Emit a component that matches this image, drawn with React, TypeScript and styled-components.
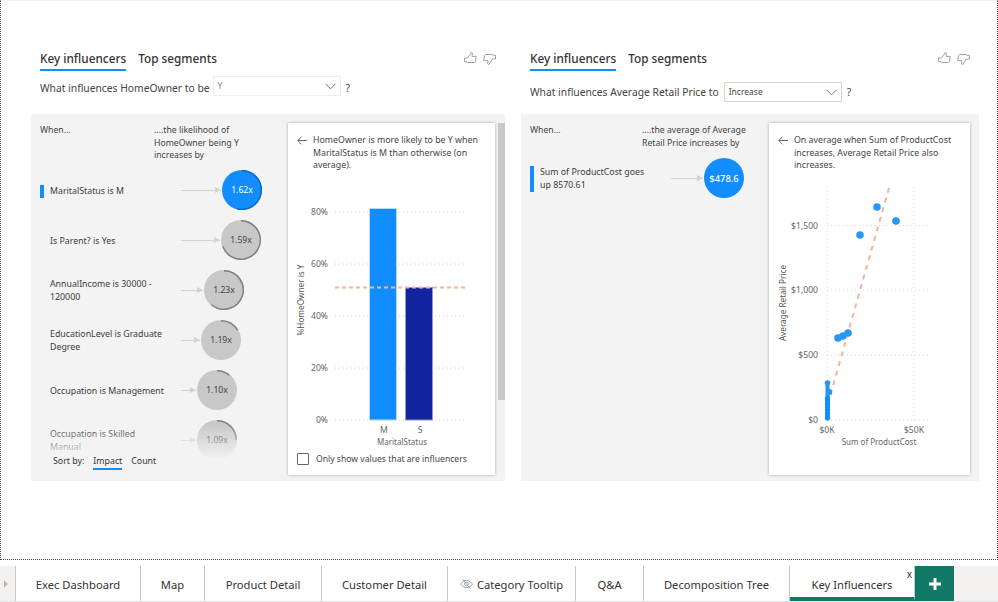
import React from "react";
import styled, { createGlobalStyle } from "styled-components";

const GlobalStyle = createGlobalStyle`
  html, body {
    margin: 0;
    padding: 0;
    background: #fff;
  }
  body {
    font-family: "Noto Sans", "Open Sans", sans-serif;
    color: #333;
  }
`;

const Page = styled.div`
  width: 998px;
  height: 602px;
  display: flex;
  flex-direction: column;
  overflow: hidden;
`;

const Canvas = styled.div`
  box-sizing: border-box;
  height: 560px;
  border: 1px dotted #444;
  border-top: 1px solid #f2f2f2;
  padding: 47px 18px 0 30px;
  display: flex;
  gap: 16px;
`;

const Visual = styled.div<{ $width: number }>`
  width: ${(p) => p.$width}px;
  flex: none;
  display: flex;
  flex-direction: column;
`;

const VisualHead = styled.div`
  height: 23px;
  padding: 0 9px;
  display: flex;
  align-items: flex-start;
  justify-content: space-between;
`;

const TabRow = styled.div`
  display: flex;
  gap: 12px;
`;

const ViewTab = styled.div<{ $active?: boolean }>`
  height: 23px;
  box-sizing: border-box;
  padding-top: 2px;
  font-size: 11.8px;
  line-height: 17px;
  font-weight: 500;
  color: #333;
  border-bottom: 2px solid ${(p) => (p.$active ? "#118dff" : "transparent")};
`;

const Thumbs = styled.div`
  display: flex;
  gap: 6px;
  padding-top: 4px;
`;

const Question = styled.div<{ $top: number }>`
  box-sizing: border-box;
  height: 43px;
  padding: ${(p) => p.$top}px 0 0 9px;
  display: flex;
  align-items: flex-start;
  font-size: 10.3px;
  line-height: 20px;
  color: #444;
`;

const Select = styled.div<{ $width: number; $strong?: boolean }>`
  box-sizing: border-box;
  width: ${(p) => p.$width}px;
  height: 20px;
  margin: ${(p) => (p.$strong ? "0 5px 0 5px" : "-2px 5px 0 3px")};
  padding: 0 4px;
  display: flex;
  align-items: center;
  justify-content: space-between;
  background: #fff;
  border: ${(p) => (p.$strong ? "1px solid #d4d4d4" : "1px solid #eee")};
  font-size: 8.5px;
  color: ${(p) => (p.$strong ? "#444" : "#7a86a0")};
`;

const Panel = styled.div`
  height: 367px;
  background: #f3f3f3;
  display: flex;
  position: relative;
`;

const Influencers = styled.div<{ $width: number }>`
  width: ${(p) => p.$width}px;
  flex: none;
  padding: 10px 0 0 9px;
  box-sizing: border-box;
  position: relative;
  overflow: hidden;
`;

const ColumnHeads = styled.div<{ $height: number; $gap: number }>`
  height: ${(p) => p.$height}px;
  display: grid;
  grid-template-columns: ${(p) => p.$gap}px 1fr;
  font-size: 8.7px;
  line-height: 12.6px;
  color: #444;
`;

const InfluencerRow = styled.div`
  height: 50px;
  display: flex;
  align-items: center;
`;

const Label = styled.div<{ $selected?: boolean }>`
  box-sizing: border-box;
  width: 141px;
  flex: none;
  margin-top: 2px;
  padding-left: ${(p) => (p.$selected ? "6px" : "10px")};
  border-left: ${(p) => (p.$selected ? "4px solid #118dff" : "none")};
  font-size: 8.8px;
  line-height: 13px;
  color: #3c3c3c;
`;

const Connector = styled.div<{ $length: number }>`
  width: ${(p) => p.$length}px;
  flex: none;
  height: 1px;
  background: #d2d2d2;
  position: relative;
  &::after {
    content: "";
    position: absolute;
    right: 0;
    top: -3px;
    border-left: 6px solid #d2d2d2;
    border-top: 3.5px solid transparent;
    border-bottom: 3.5px solid transparent;
  }
`;

const BubbleWrap = styled.div<{ $selected?: boolean }>`
  width: 40px;
  height: 40px;
  flex: none;
  margin-left: 1px;
  border-radius: 50%;
  position: relative;
  display: flex;
  align-items: center;
  justify-content: center;
  background: ${(p) => (p.$selected ? "#118dff" : "#c8c8c8")};
  color: ${(p) => (p.$selected ? "#fff" : "#444")};
  & > svg {
    position: absolute;
    inset: 0;
  }
`;

const BubbleText = styled.span<{ $big?: boolean }>`
  position: relative;
  font-size: ${(p) => (p.$big ? "9.4px" : "8.6px")};
  font-weight: ${(p) => (p.$big ? 500 : 400)};
`;

const Fade = styled.div`
  position: absolute;
  left: 0;
  right: 0;
  bottom: 21px;
  height: 36px;
  background: linear-gradient(rgba(243, 243, 243, 0), #f3f3f3);
`;

const SortBar = styled.div`
  position: absolute;
  left: 22px;
  bottom: 11px;
  display: flex;
  gap: 9px;
  font-size: 8.8px;
  line-height: 14px;
  color: #333;
`;

const SortOption = styled.span<{ $active?: boolean }>`
  border-bottom: 2px solid ${(p) => (p.$active ? "#118dff" : "transparent")};
`;

const DetailCard = styled.div<{ $width: number }>`
  box-sizing: border-box;
  width: ${(p) => p.$width}px;
  height: 352px;
  margin-top: 9px;
  flex: none;
  background: #fff;
  box-shadow: 0 0 3px rgba(0, 0, 0, 0.3);
  display: flex;
  flex-direction: column;
  position: relative;
`;

const CardHead = styled.div`
  height: 50px;
  flex: none;
  padding: 11px 6px 0 9px;
  box-sizing: border-box;
  display: flex;
  gap: 6px;
  font-size: 8.8px;
  line-height: 12.5px;
  color: #444;
`;

const BackIcon = styled.svg`
  flex: none;
  margin-top: 2px;
`;

const Chart = styled.svg`
  display: block;
  flex: none;
`;

const ChartText = styled.text<{ $size?: number; $dark?: boolean }>`
  font-family: "Noto Sans", sans-serif;
  font-size: ${(p) => p.$size ?? 8.6}px;
  fill: ${(p) => (p.$dark ? "#555" : "#666")};
`;

const CheckRow = styled.div`
  display: flex;
  align-items: center;
  gap: 7px;
  padding: 5px 0 0 9px;
  font-size: 8.6px;
  line-height: 12px;
  color: #444;
`;

const CheckBox = styled.span`
  width: 12px;
  height: 12px;
  box-sizing: border-box;
  border: 1px solid #666;
  border-radius: 1px;
  background: #fff;
`;

const Scrollbar = styled.div`
  position: absolute;
  left: 467px;
  top: 9px;
  width: 7px;
  height: 277px;
  background: #c8c8c8;
`;

const TabStrip = styled.div`
  margin-top: 6px;
  height: 36px;
  box-sizing: border-box;
  display: flex;
  background: #f3f2f1;
  border-bottom: 1px solid #e4e4e4;
`;

const Pager = styled.div`
  width: 16px;
  flex: none;
  display: flex;
  align-items: center;
  padding-left: 4px;
  box-sizing: border-box;
  border-right: 1px solid #c8c8c8;
  &::before {
    content: "";
    border-left: 4px solid #bbb;
    border-top: 4px solid transparent;
    border-bottom: 4px solid transparent;
  }
`;

const PageTab = styled.div<{ $width: number; $active?: boolean }>`
  width: ${(p) => p.$width}px;
  flex: none;
  box-sizing: border-box;
  background: #fff;
  border-right: 1px solid #c8c8c8;
  border-bottom: ${(p) => (p.$active ? "4px solid #117865" : "none")};
  padding-top: ${(p) => (p.$active ? "5px" : "1px")};
  display: flex;
  align-items: center;
  justify-content: center;
  gap: 4px;
  font-size: 11.2px;
  color: #333;
  position: relative;
`;

const CloseMark = styled.span`
  position: absolute;
  top: 2px;
  right: 2px;
  font-size: 10px;
  line-height: 12px;
  color: #333;
`;

const AddTab = styled.div`
  width: 39px;
  flex: none;
  background: #117865;
  display: flex;
  align-items: center;
  justify-content: center;
`;

function ThumbUp() {
  return (
    <svg width="13" height="13" viewBox="0 0 14 14" fill="none" stroke="#999" strokeWidth="1">
      <path d="M0.5 6.5h3.2l3-4.2 1-1.8 1.3 .6-.4 3.6h4.6l-.8 5.8-1 .8H4l-.6-.8H.5z" />
    </svg>
  );
}

function ThumbDown() {
  return (
    <svg width="13" height="13" viewBox="0 0 14 14" fill="none" stroke="#999" strokeWidth="1">
      <path d="M13.5 7.5h-3.2l-3 4.2-1 1.8-1.3-.6.4-3.6H.8l.8-5.8 1-.8H10l.6.8h2.9z" />
    </svg>
  );
}

function Chevron() {
  return (
    <svg width="11" height="7" viewBox="0 0 11 7" fill="none" stroke="#777" strokeWidth="1">
      <path d="M.5.8l5 5 5-5" />
    </svg>
  );
}

function Back() {
  return (
    <BackIcon width="10" height="9" viewBox="0 0 10 9" fill="none" stroke="#555" strokeWidth="0.9">
      <path d="M10 4.5H.8M4.5.7L.8 4.5l3.700 3.800" />
    </BackIcon>
  );
}

function HiddenEye() {
  return (
    <svg width="13" height="12" viewBox="0 0 13 12" fill="none" stroke="#8f9aa3" strokeWidth="0.9">
      <path d="M.5 6c2-2.600 4-3.600 6-3.600s4 1 6 3.600c-2 2.600-4 3.600-6 3.600S2.500 8.600.5 6z" />
      <circle cx="6.500" cy="6" r="1.900" />
      <path d="M2.500 1l8 10" />
    </svg>
  );
}

function Arc({ sweep, color }: { sweep: number; color: string }) {
  const r = 19.25;
  const a = ((sweep - 90) * Math.PI) / 180;
  const x = 20 + r * Math.cos(a);
  const y = 20 + r * Math.sin(a);
  const large = sweep > 180 ? 1 : 0;
  return (
    <svg width="40" height="40" viewBox="0 0 40 40" fill="none">
      <path d={`M20 ${20 - r}A${r} ${r} 0 ${large} 1 ${x} ${y}`} stroke={color} strokeWidth="1.5" />
    </svg>
  );
}

function Influencer({
  label,
  value,
  length,
  sweep,
  selected,
  big,
}: {
  label: React.ReactNode;
  value: string;
  length: number;
  sweep: number;
  selected?: boolean;
  big?: boolean;
}) {
  return (
    <InfluencerRow>
      <Label $selected={selected}>{label}</Label>
      <Connector $length={length} />
      <BubbleWrap $selected={selected}>
        <Arc sweep={sweep} color={selected ? "#0a6cc4" : "#808080"} />
        <BubbleText $big={big}>{value}</BubbleText>
      </BubbleWrap>
    </InfluencerRow>
  );
}

function BarChart() {
  const ticks = [
    { t: "80%", y: 39 },
    { t: "60%", y: 91 },
    { t: "40%", y: 143 },
    { t: "20%", y: 195 },
    { t: "0%", y: 247 },
  ];
  return (
    <Chart width="207" height="275" viewBox="0 0 207 275">
      {ticks.map((k) => (
        <g key={k.t}>
          <line x1="47" x2="178" y1={k.y} y2={k.y} stroke="#d0d0d0" strokeDasharray="1 3" />
          <ChartText x="40" y={k.y + 3} textAnchor="end">{k.t}</ChartText>
        </g>
      ))}
      <rect x="81.500" y="35.500" width="27" height="211.500" fill="#118dff" stroke="#b5dbff" />
      <rect x="117.500" y="114.500" width="27" height="132.500" fill="#12239e" stroke="#8f98d0" />
      <line x1="47" x2="178" y1="114.500" y2="114.500" stroke="#f4b49c" strokeWidth="2" strokeDasharray="4 3" />
      <ChartText x="96" y="260" textAnchor="middle">M</ChartText>
      <ChartText x="132" y="260" textAnchor="middle">S</ChartText>
      <ChartText x="114" y="272" textAnchor="middle" $size={8}>MaritalStatus</ChartText>
      <ChartText transform="translate(16 127) rotate(-90)" textAnchor="middle" $size={8.2} $dark>%HomeOwner is Y</ChartText>
    </Chart>
  );
}

const columnYs = [225, 228, 231, 234, 237, 240, 243, 245];

function ScatterChart() {
  const ticks = [
    { t: "$1,500", y: 52.5 },
    { t: "$1,000", y: 117 },
    { t: "$500", y: 182 },
    { t: "$0", y: 247 },
  ];
  const pts = [
    [91, 62],
    [108, 34],
    [127, 48],
    [69, 165],
    [74, 163],
    [79, 160],
  ];
  return (
    <Chart width="201" height="275" viewBox="0 0 201 275">
      <line x1="58" x2="58" y1="14" y2="247" stroke="#d8d8d8" strokeDasharray="1 3" />
      <line x1="145" x2="145" y1="14" y2="247" stroke="#d8d8d8" strokeDasharray="1 3" />
      {ticks.map((k) => (
        <g key={k.t}>
          <line x1="58" x2="159" y1={k.y} y2={k.y} stroke="#d0d0d0" strokeDasharray="1 3" />
          <ChartText x="49" y={k.y + 3} textAnchor="end">{k.t}</ChartText>
        </g>
      ))}
      <line x1="120" y1="15" x2="58" y2="234" stroke="#f4b49c" strokeWidth="2" strokeDasharray="5 5" />
      {pts.map(([x, y]) => (
        <circle key={`${x}-${y}`} cx={x} cy={y} r="3.8" fill="#2b95f5" />
      ))}
      <circle cx="58.500" cy="210" r="2.800" fill="#2b95f5" />
      <circle cx="60" cy="219" r="3.200" fill="#2b95f5" />
      <rect x="56.500" y="212" width="4" height="20" fill="#2b95f5" />
      {columnYs.map((y) => (
        <circle key={y} cx="58.500" cy={y} r="2.600" fill="#118dff" />
      ))}
      <ChartText x="58" y="260" textAnchor="middle">$0K</ChartText>
      <ChartText x="145" y="260" textAnchor="middle">$50K</ChartText>
      <ChartText x="110" y="272" textAnchor="middle" $size={8}>Sum of ProductCost</ChartText>
      <ChartText transform="translate(17 130) rotate(-90)" textAnchor="middle" $size={8.2} $dark>Average Retail Price</ChartText>
    </Chart>
  );
}

const pages = [
  { name: "Exec Dashboard", width: 125 },
  { name: "Map", width: 64 },
  { name: "Product Detail", width: 117 },
  { name: "Customer Detail", width: 126 },
  { name: "Category Tooltip", width: 128, hidden: true },
  { name: "Q&A", width: 68 },
  { name: "Decomposition Tree", width: 146 },
];

export default function App() {
  return (
    <Page>
      <GlobalStyle />
      <Canvas>
        <Visual $width={474}>
          <VisualHead>
            <TabRow>
              <ViewTab $active>Key influencers</ViewTab>
              <ViewTab>Top segments</ViewTab>
            </TabRow>
            <Thumbs>
              <ThumbUp />
              <ThumbDown />
            </Thumbs>
          </VisualHead>
          <Question $top={7}>
            What influences HomeOwner to be
            <Select $width={128}>
              Y
              <Chevron />
            </Select>
            ?
          </Question>
          <Panel>
            <Influencers $width={257}>
              <ColumnHeads $height={41} $gap={114}>
                <span>When...</span>
                <span>
                  ....the likelihood of
                  <br />
                  HomeOwner being Y
                  <br />
                  increases by
                </span>
              </ColumnHeads>
              <Influencer label="MaritalStatus is M" value="1.62x" length={40} sweep={195} selected />
              <Influencer label="Is Parent? is Yes" value="1.59x" length={39} sweep={250} />
              <Influencer label={<>AnnualIncome is 30000 -<br />120000</>} value="1.23x" length={22} sweep={220} />
              <Influencer label={<>EducationLevel is Graduate<br />Degree</>} value="1.19x" length={19} sweep={60} />
              <Influencer label="Occupation is Management" value="1.10x" length={15} sweep={40} />
              <Influencer label={<>Occupation is Skilled<br />Manual</>} value="1.09x" length={15} sweep={90} />
              <Fade />
              <SortBar>
                Sort by:
                <SortOption $active>Impact</SortOption>
                <SortOption>Count</SortOption>
              </SortBar>
            </Influencers>
            <DetailCard $width={207}>
              <CardHead>
                <Back />
                <span>HomeOwner is more likely to be Y when MaritalStatus is M than otherwise (on average).</span>
              </CardHead>
              <BarChart />
              <CheckRow>
                <CheckBox />
                Only show values that are influencers
              </CheckRow>
            </DetailCard>
            <Scrollbar />
          </Panel>
        </Visual>
        <Visual $width={458}>
          <VisualHead>
            <TabRow>
              <ViewTab $active>Key influencers</ViewTab>
              <ViewTab>Top segments</ViewTab>
            </TabRow>
            <Thumbs>
              <ThumbUp />
              <ThumbDown />
            </Thumbs>
          </VisualHead>
          <Question $top={11}>
            What influences Average Retail Price to
            <Select $width={118} $strong>
              Increase
              <Chevron />
            </Select>
            ?
          </Question>
          <Panel>
            <Influencers $width={248}>
              <ColumnHeads $height={29} $gap={112}>
                <span>When...</span>
                <span>
                  ....the average of Average
                  <br />
                  Retail Price increases by
                </span>
              </ColumnHeads>
              <Influencer
                label={<>Sum of ProductCost goes<br />up 8570.61</>}
                value="$478.6"
                length={32}
                sweep={0}
                selected
                big
              />
            </Influencers>
            <DetailCard $width={201}>
              <CardHead>
                <Back />
                <span>On average when Sum of ProductCost increases, Average Retail Price also increases.</span>
              </CardHead>
              <ScatterChart />
            </DetailCard>
          </Panel>
        </Visual>
      </Canvas>
      <TabStrip>
        <Pager />
        {pages.map((p) => (
          <PageTab key={p.name} $width={p.width}>
            {p.hidden && <HiddenEye />}
            {p.name}
          </PageTab>
        ))}
        <PageTab $width={125} $active>
          Key Influencers
          <CloseMark>x</CloseMark>
        </PageTab>
        <AddTab>
          <svg width="12" height="12" viewBox="0 0 12 12" fill="#fff">
            <path d="M4.5 0h3v4.500H12v3H7.500V12h-3V7.500H0v-3h4.500z" />
          </svg>
        </AddTab>
      </TabStrip>
    </Page>
  );
}
